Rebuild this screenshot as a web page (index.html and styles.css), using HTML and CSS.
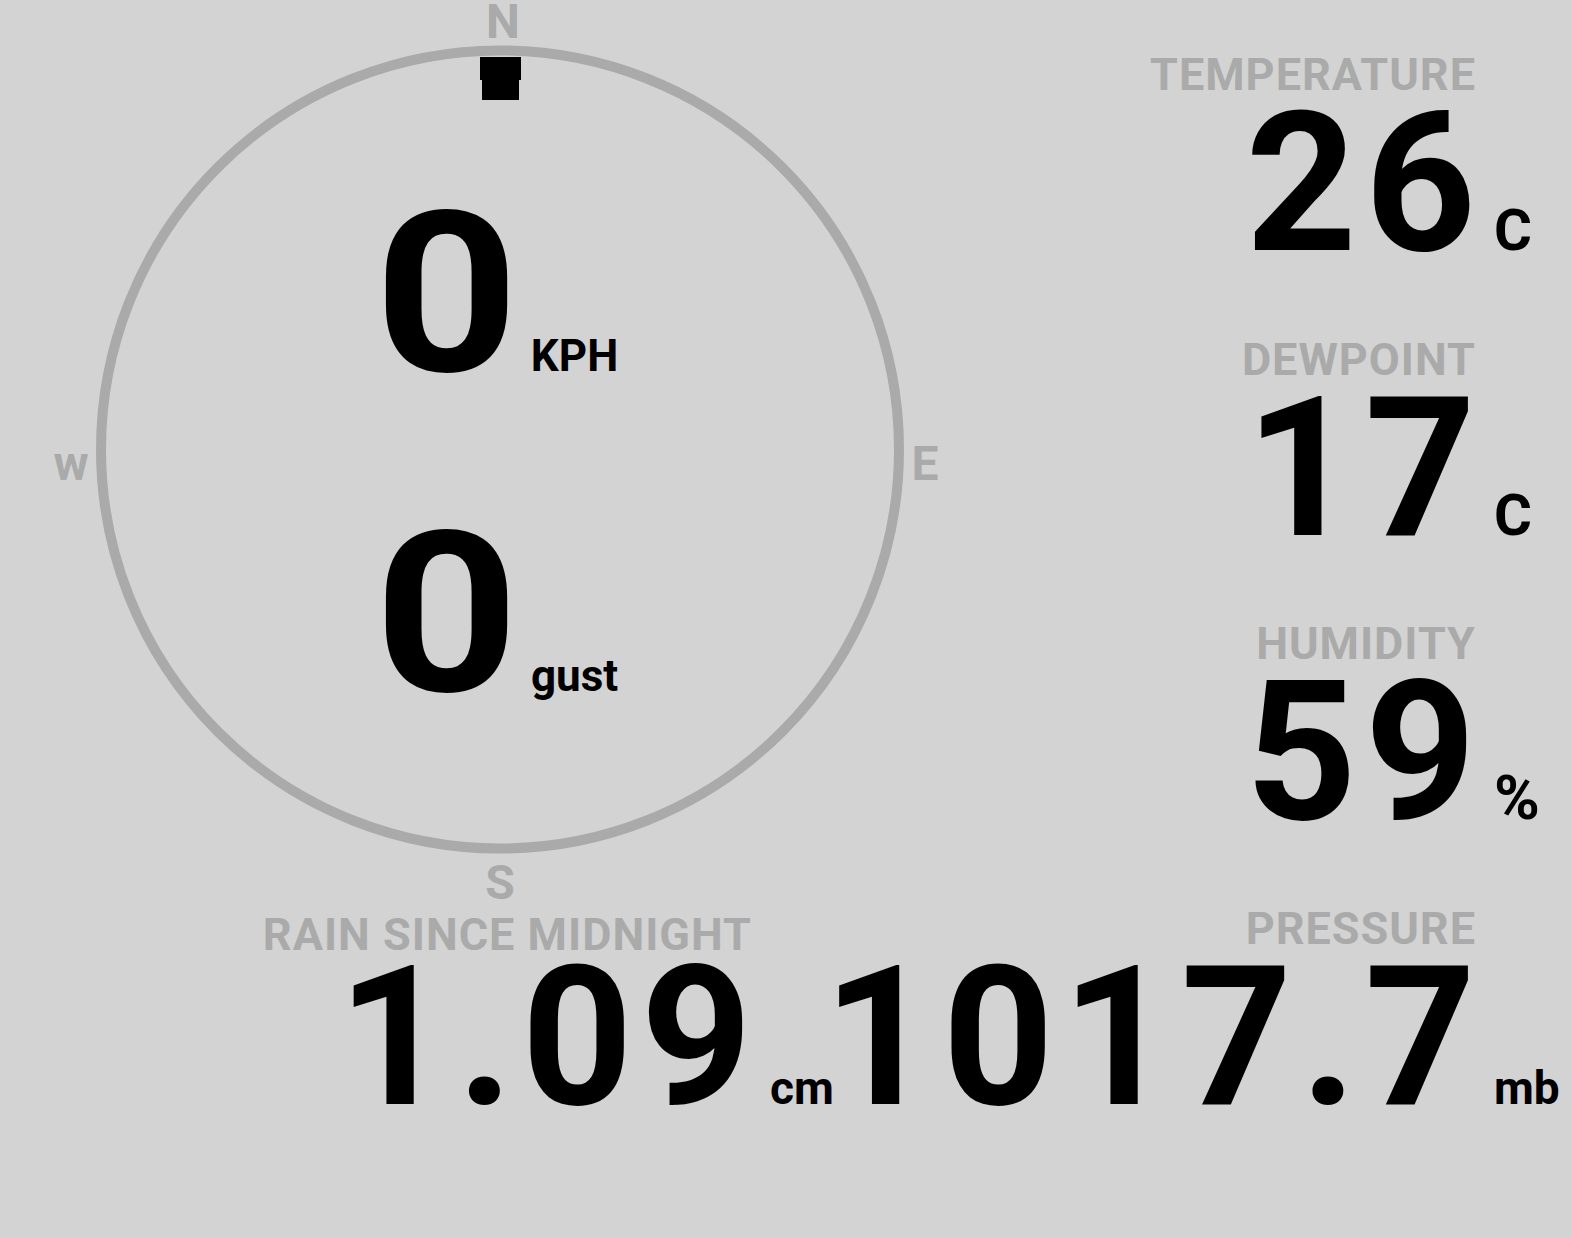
FILE: index.html
```html
<!DOCTYPE html>
<html lang="en">
<head>
    <meta charset="UTF-8">
    <meta name="viewport" content="width=device-width, initial-scale=1.0">
    <title>Weather station</title>
    <link rel="stylesheet" href="styles.css">
</head>
<body>
    <main class="station">
        <div class="compass">
            <svg class="dial" width="1000" height="900" viewBox="0 0 1000 900">
                <circle cx="500" cy="449.5" r="399" fill="none" stroke="#aaaaaa" stroke-width="10"/>
                <path d="M480 57H521V80H519V100H482V80H480Z" fill="#000"/>
                <text class="cardinal" x="503" y="38">N</text>
                <text class="cardinal" x="925" y="480">E</text>
                <text class="cardinal" x="500" y="899">S</text>
                <text class="cardinal" x="71" y="480">w</text>
            </svg>
            <div class="speeds">
                <div class="speed">
                    <span class="speed-value">0</span>
                    <span class="speed-unit">KPH</span>
                </div>
                <div class="speed">
                    <span class="speed-value">0</span>
                    <span class="speed-unit">gust</span>
                </div>
            </div>
        </div>

        <div class="reading">
            <div class="reading-label">TEMPERATURE</div>
            <div class="reading-row">
                <span class="reading-value">26</span>
                <span class="reading-unit">C</span>
            </div>
        </div>

        <div class="reading">
            <div class="reading-label">DEWPOINT</div>
            <div class="reading-row">
                <span class="reading-value">17</span>
                <span class="reading-unit">C</span>
            </div>
        </div>

        <div class="reading">
            <div class="reading-label">HUMIDITY</div>
            <div class="reading-row">
                <span class="reading-value">59</span>
                <span class="reading-unit unit-percent">%</span>
            </div>
        </div>

        <div class="reading reading-rain">
            <div class="reading-label">RAIN SINCE MIDNIGHT</div>
            <div class="reading-row">
                <span class="reading-value">1.09</span>
                <span class="reading-unit unit-small">cm</span>
            </div>
        </div>

        <div class="reading">
            <div class="reading-label">PRESSURE</div>
            <div class="reading-row">
                <span class="reading-value">1017.7</span>
                <span class="reading-unit unit-small">mb</span>
            </div>
        </div>
    </main>
</body>
</html>
```

FILE: styles.css
```css
body {
    margin: 0;
    background: #d3d3d3;
    font-family: Roboto, 'Liberation Sans', sans-serif;
    font-weight: 700;
    color: #000;
    overflow: hidden;
}
.station {
    display: grid;
    grid-template-columns: 847px minmax(0, 1fr);
    grid-template-rows: repeat(4, 284.5px);
}
.compass {
    grid-column: 1;
    grid-row: 1 / 4;
    position: relative;
    width: 1000px;
    height: 900px;
}
.dial {
    display: block;
    overflow: visible;
}
.cardinal {
    font-family: Roboto, 'Liberation Sans', sans-serif;
    font-weight: 700;
    font-size: 48px;
    fill: #aaaaaa;
    text-anchor: middle;
}
.speeds {
    position: absolute;
    inset: 0;
    padding-top: 7px;
    display: flex;
    flex-direction: column;
    align-items: center;
    justify-content: center;
}
.speed {
    display: flex;
    align-items: baseline;
    height: 320px;
    line-height: 320px;
}
.speed-value {
    font-size: 225px;
    transform: scaleX(1.12);
}
.speed-unit {
    font-size: 44px;
    margin-left: 20px;
}
.reading {
    min-width: 0;
    display: flex;
    flex-direction: column;
    align-items: flex-end;
    padding-top: 52px;
}
.reading-rain {
    grid-column: 1;
    grid-row: 4;
}
.reading-rain .reading-label {
    margin-top: 6px;
    margin-bottom: -6px;
}
.reading-label {
    font-size: 45px;
    line-height: 45px;
    color: #aaaaaa;
    letter-spacing: 1px;
    margin-right: 95px;
    white-space: nowrap;
}
.reading-row {
    display: flex;
    align-items: baseline;
    flex-shrink: 0;
}
.reading-value {
    font-size: 194px;
    line-height: 173px;
    letter-spacing: 8px;
    white-space: nowrap;
}
.reading-unit {
    width: 87px;
    flex-shrink: 0;
    box-sizing: border-box;
    padding-left: 10px;
    font-size: 58px;
    line-height: 1;
}
.unit-percent {
    font-size: 62px;
}
.unit-small {
    font-size: 46px;
}
```
